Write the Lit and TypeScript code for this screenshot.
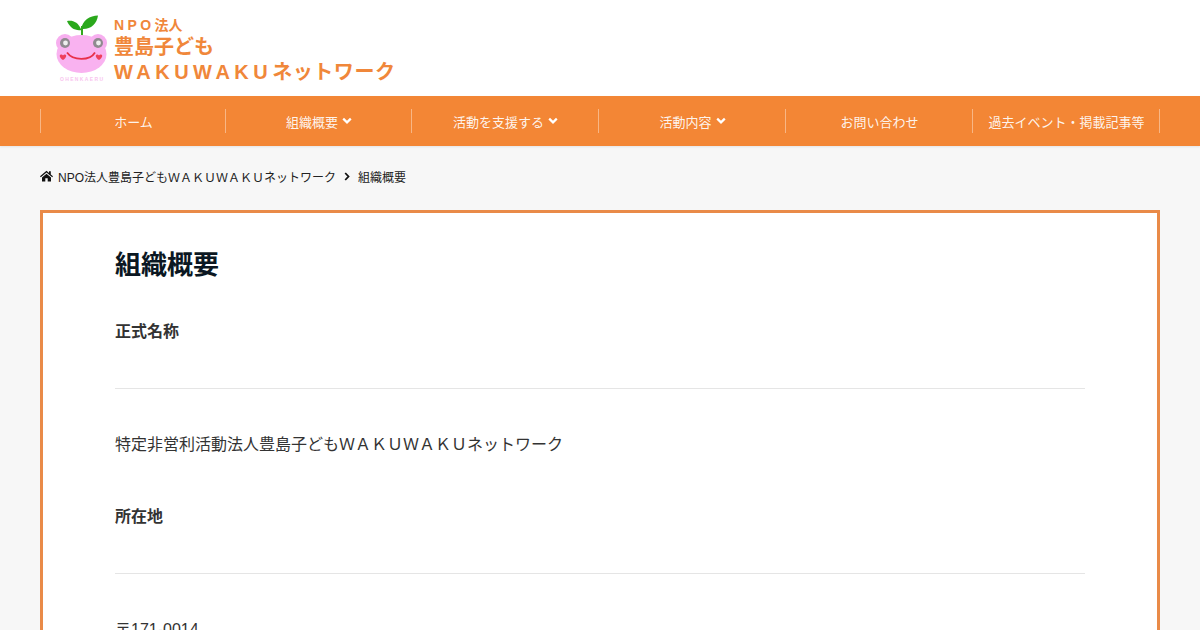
import { LitElement, html, css } from 'lit';
import { customElement } from 'lit/decorators.js';

const chevron = html`<svg class="chev" viewBox="0 0 10 8"><path d="M1.2 1.6 5 5.4 8.8 1.6" fill="none" stroke="currentColor" stroke-width="2.2"/></svg>`;

const navItems = [
    { label: 'ホーム', sub: false },
    { label: '組織概要', sub: true },
    { label: '活動を支援する', sub: true },
    { label: '活動内容', sub: true },
    { label: 'お問い合わせ', sub: false },
    { label: '過去イベント・掲載記事等', sub: false },
];

@customElement('app-root')
export class AppRoot extends LitElement {
    static styles = css`
        :host {
            display: block;
            height: 630px;
            overflow: hidden;
            background: #f7f7f7;
            color: #333;
            font-family: "Liberation Sans", "Noto Sans CJK JP", sans-serif;
        }
        .header {
            height: 96px;
            background: #fff;
            display: flex;
            padding-left: 50px;
            box-sizing: border-box;
        }
        .frog {
            width: 64px;
            height: 78px;
            margin-top: 10px;
            flex: none;
        }
        .logo-text {
            color: #f0873a;
            font-weight: bold;
            padding-top: 16px;
            display: flex;
            flex-direction: column;
        }
        .logo-small {
            font-size: 14px;
            line-height: 18px;
        }
        .logo-small i {
            font-style: normal;
            letter-spacing: 3.4px;
        }
        .logo-mid {
            font-size: 20px;
            line-height: 24px;
            margin-top: 1px;
        }
        .logo-big {
            font-size: 20px;
            line-height: 24px;
            margin-top: 1px;
            letter-spacing: 0.55px;
        }
        .logo-big i {
            font-style: normal;
            letter-spacing: 4.5px;
        }
        nav {
            height: 50px;
            background: #f38635;
            padding: 13px 40px 0;
            box-sizing: border-box;
            display: grid;
            grid-template-columns: 185px 186px 187px 187px 187px 188px;
            box-shadow: 0 1px 2px rgba(0, 0, 0, 0.08);
            position: relative;
        }
        .item {
            height: 24px;
            display: flex;
            align-items: center;
            justify-content: center;
            gap: 4px;
            color: rgba(255, 255, 255, 0.92);
            font-size: 13px;
            border-left: 1px solid rgba(255, 255, 255, 0.4);
            padding-left: 1px;
            box-sizing: border-box;
        }
        .item:last-child {
            border-right: 1px solid rgba(255, 255, 255, 0.4);
        }
        .chev {
            width: 10px;
            height: 8px;
            margin-top: -1px;
            color: #fff;
        }
        .crumbs {
            height: 60px;
            padding: 0 40px;
            display: flex;
            align-items: center;
            font-size: 12px;
            color: #222;
            box-sizing: border-box;
        }
        .home {
            width: 13px;
            height: 12px;
            margin-right: 5px;
        }
        .crumb-chev {
            width: 6px;
            height: 9px;
            margin: 0 8px 0 8px;
        }
        .card {
            margin: 4px 40px 0;
            border: 3px solid #e98a48;
            background: #fff;
            padding: 32px 72px 40px;
        }
        h1 {
            margin: 0 0 35px;
            font-size: 26px;
            line-height: 40px;
            font-weight: bold;
            color: #0b1722;
        }
        h2 {
            margin: 0;
            font-size: 16px;
            line-height: 24px;
            font-weight: bold;
            color: #333;
            padding-bottom: 44px;
            border-bottom: 1px solid #e5e5e5;
        }
        p {
            margin: 43px 0 47px;
            font-size: 16px;
            line-height: 26px;
            color: #333;
        }
    `;

    render() {
        return html`
            <div class="header">
                <svg class="frog" viewBox="50 10 64 78">
                    <path d="M82 39V26" stroke="#35a81e" stroke-width="2" fill="none"/>
                    <path d="M81.500 30C78 22 73 20 67 21 70 28 75 31 81.500 30Z" fill="#2aa81c"/>
                    <path d="M81.500 29C82 20 90 16 98 15.500 97 24 90 30 81.500 29Z" fill="#2aa81c"/>
                    <circle cx="65" cy="43" r="9" fill="#f7aeef"/>
                    <circle cx="98" cy="43" r="9" fill="#f7aeef"/>
                    <ellipse cx="81.500" cy="54" rx="25" ry="19" fill="#f9b2f0"/>
                    <circle cx="65" cy="43" r="5" fill="#8f8a8f"/>
                    <circle cx="98" cy="43" r="5" fill="#8f8a8f"/>
                    <circle cx="65.500" cy="43" r="2.400" fill="#eee"/>
                    <circle cx="98.500" cy="43" r="2.400" fill="#eee"/>
                    <path d="M67 52.500C73 61 90 61 95 52.500" stroke="#e8304a" stroke-width="1.800" fill="none"/>
                    <path d="M63 60C59 57.500 59 54 61.500 54.500 62.500 54.800 62.800 55.200 63 55.500 63.300 55.200 63.500 54.800 64.500 54.500 67 54 67 57.500 63 60Z" fill="#ee3f5c"/>
                    <path d="M99 60C95 57.500 95 54 97.500 54.500 98.500 54.800 98.800 55.200 99 55.500 99.300 55.200 99.500 54.800 100.500 54.500 103 54 103 57.500 99 60Z" fill="#ee3f5c"/>
                    <text x="60" y="81" font-size="5" font-weight="bold" fill="#f8c4ee" textLength="43" font-family="Liberation Sans">OHENKAERU</text>
                </svg>
                <div class="logo-text">
                    <span class="logo-small"><i>NPO</i>法人</span>
                    <span class="logo-mid">豊島子ども</span>
                    <span class="logo-big"><i>WAKUWAKU</i>ネットワーク</span>
                </div>
            </div>
            <nav>
                ${navItems.map(n => html`<div class="item">${n.label}${n.sub ? chevron : ''}</div>`)}
            </nav>
            <div class="crumbs">
                <svg class="home" viewBox="0 0 13 11">
                    <path d="M6.500 0.300 0 5.800 0.800 6.700 6.500 1.900 12.200 6.700 13 5.800 10.800 3.900V0.800H9V2.400Z" fill="#111"/>
                    <path d="M2 7V11H5.300V7.800H7.700V11H11V7L6.500 3.200Z" fill="#111"/>
                </svg>
                <span>NPO法人豊島子どもＷＡＫＵＷＡＫＵネットワーク</span>
                <svg class="crumb-chev" viewBox="0 0 6 9"><path d="M1.200 1 4.500 4.500 1.200 8" fill="none" stroke="#111" stroke-width="1.800"/></svg>
                <span>組織概要</span>
            </div>
            <div class="card">
                <h1>組織概要</h1>
                <h2>正式名称</h2>
                <p>特定非営利活動法人豊島子どもＷＡＫＵＷＡＫＵネットワーク</p>
                <h2>所在地</h2>
                <p>〒171-0014</p>
            </div>
        `;
    }
}
